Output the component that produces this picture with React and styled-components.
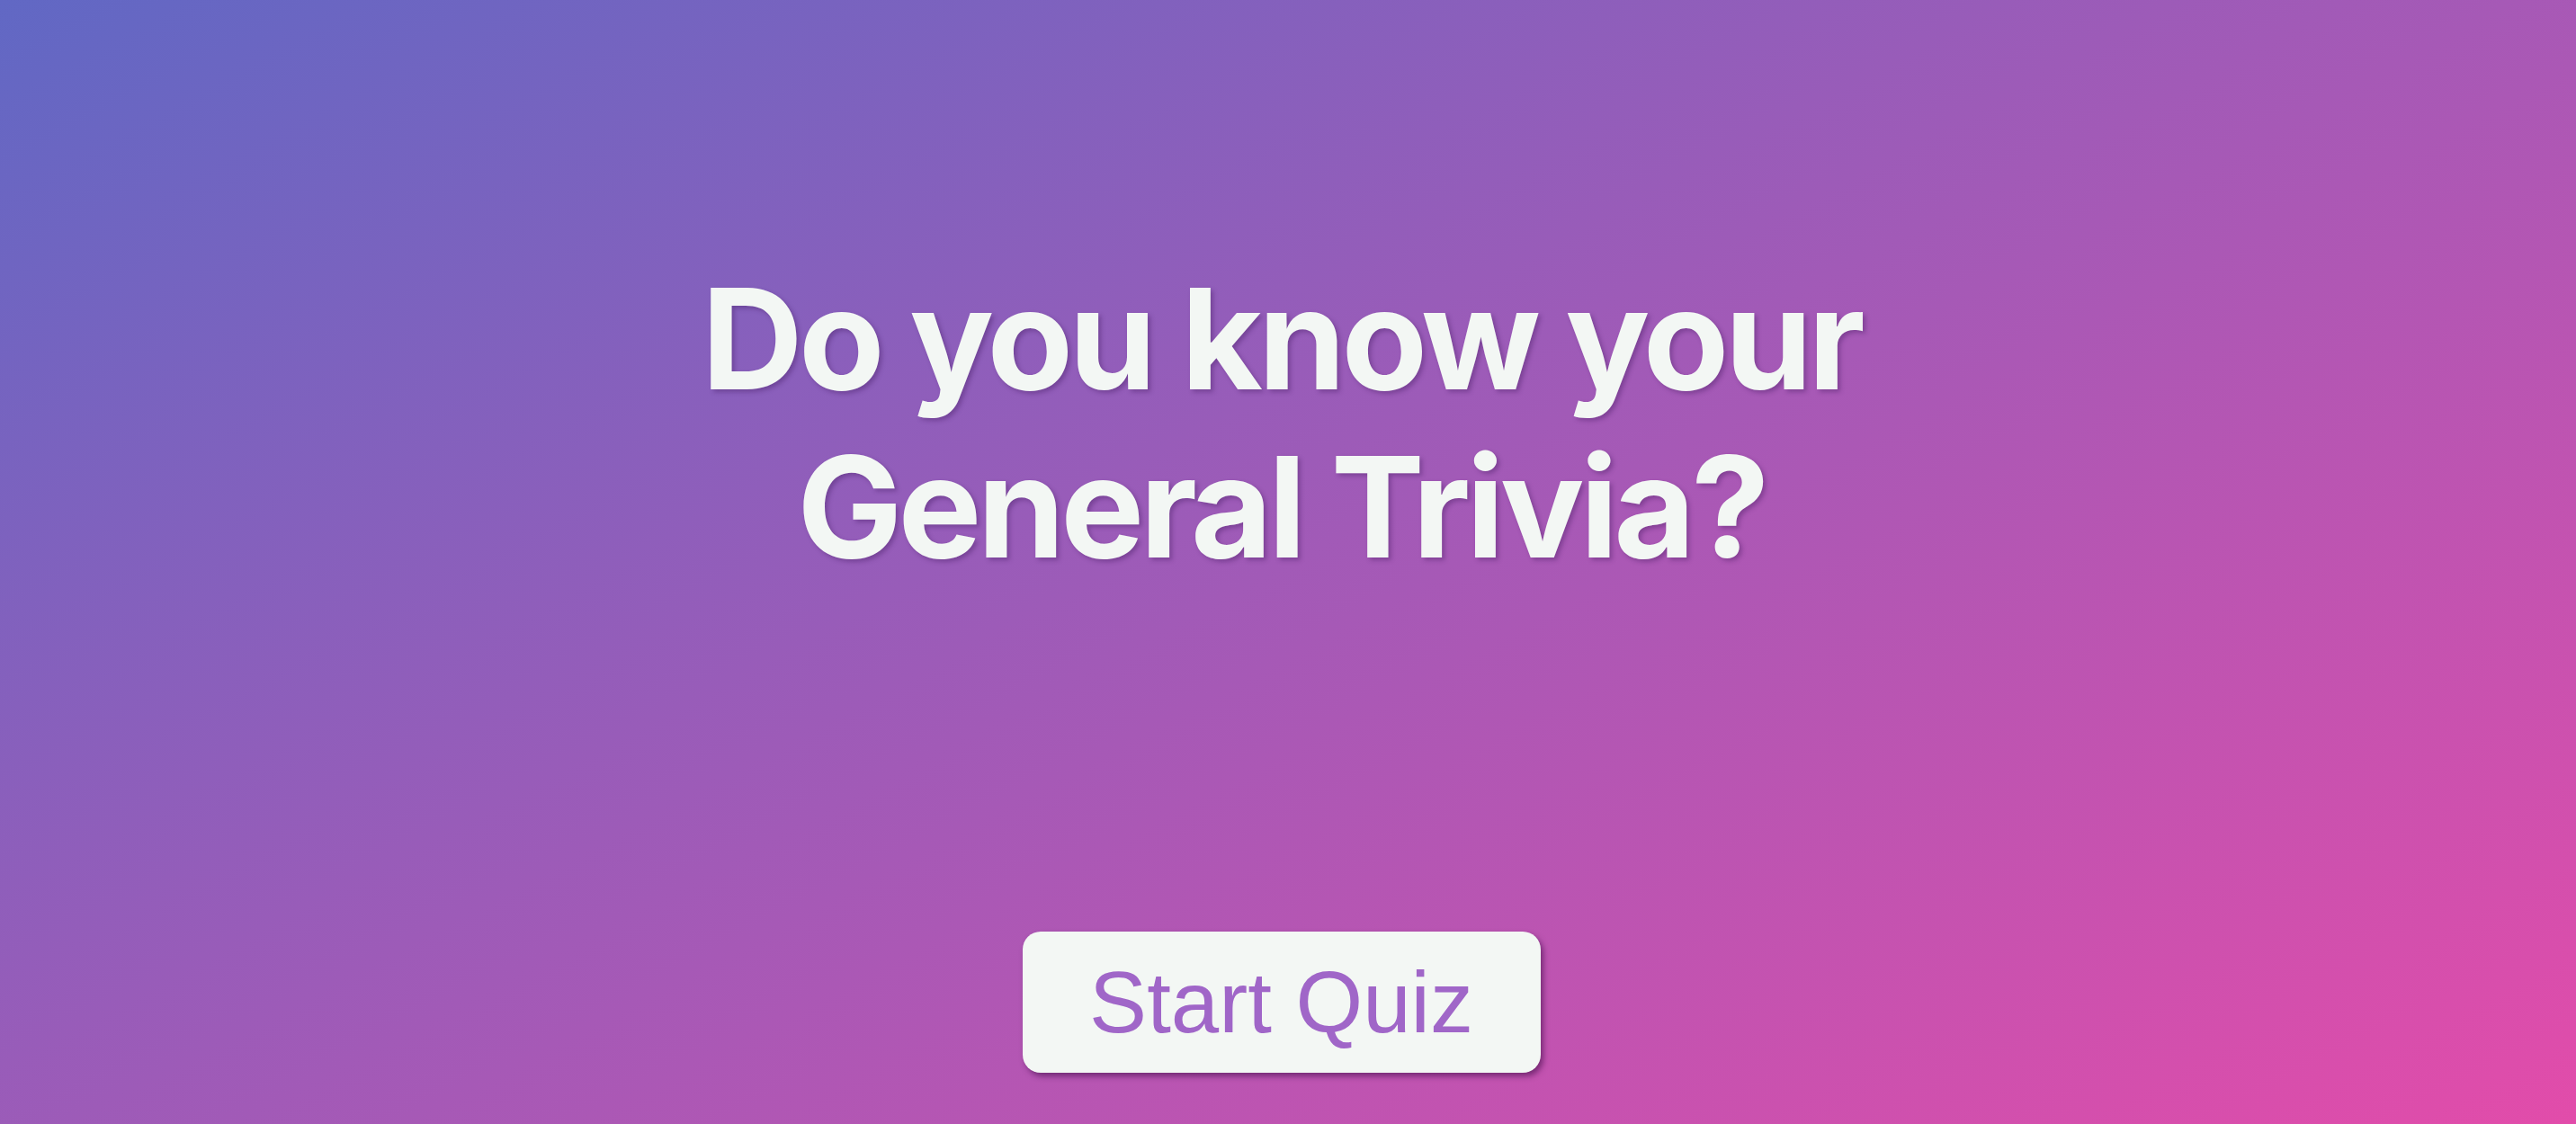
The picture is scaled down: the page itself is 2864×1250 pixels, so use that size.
import React from "react";
import styled, { createGlobalStyle } from "styled-components";

const Global = createGlobalStyle`
  html, body {
    margin: 0;
    padding: 0;
  }
  body {
    font-family: Inter, "Liberation Sans", sans-serif;
  }
`;

const Page = styled.main`
  box-sizing: border-box;
  width: 100%;
  height: 1250px;
  padding-right: 15px;
  overflow: hidden;
  display: flex;
  flex-direction: column;
  align-items: center;
  background: linear-gradient(152deg, #6168c4 0%, #e24caa 100%);
`;

const Title = styled.h1`
  margin: 283px 0 0;
  width: 1500px;
  text-align: center;
  font-family: Inter, "Liberation Sans", sans-serif;
  font-weight: 700;
  font-size: 156px;
  line-height: 1.2;
  letter-spacing: -4.7px;
  color: #f3f7f4;
  text-shadow: 3px 3px 5px rgba(60, 20, 90, 0.35);
`;

const StartButton = styled.button`
  margin-top: 379px;
  box-sizing: border-box;
  width: 576px;
  height: 157px;
  border: none;
  border-radius: 20px;
  background: #f3f7f4;
  color: #a066c8;
  font-family: "Liberation Sans", Arial, sans-serif;
  font-size: 96px;
  font-weight: 400;
  cursor: pointer;
  box-shadow: 3px 4px 6px rgba(60, 10, 70, 0.55);
`;

export default function App() {
  return (
    <>
      <Global />
      <Page>
        <Title>
          Do you know your
          <br />
          General Trivia?
        </Title>
        <StartButton>Start Quiz</StartButton>
      </Page>
    </>
  );
}
